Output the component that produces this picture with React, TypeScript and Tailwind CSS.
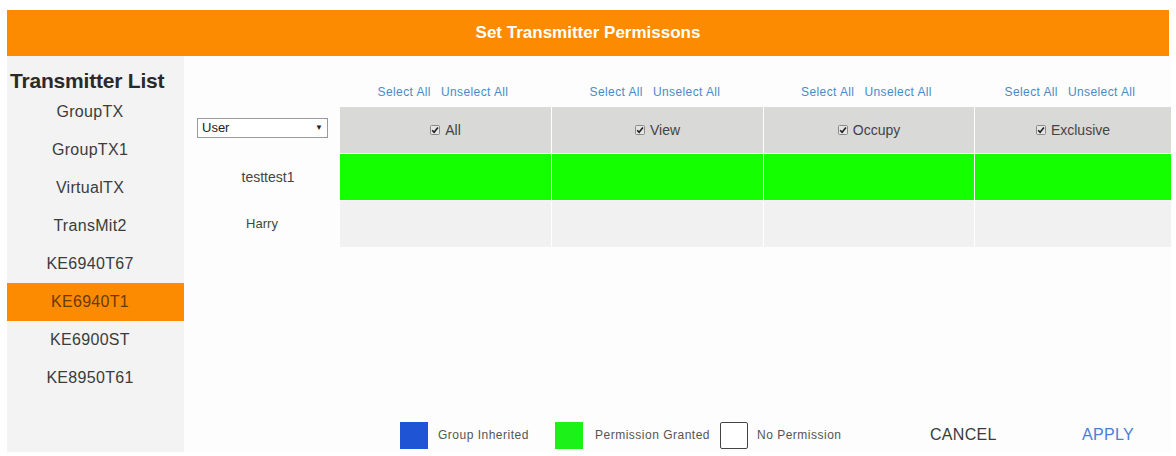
import { FC } from 'react';

const transmitters = ['GroupTX', 'GroupTX1', 'VirtualTX', 'TransMit2', 'KE6940T67', 'KE6940T1', 'KE6900ST', 'KE8950T61'];
const permisos = ['All', 'View', 'Occupy', 'Exclusive'];

const CheckIcon: FC = () => (
  <svg width="10" height="10" viewBox="0 0 10 10" className="mr-[5px] shrink-0">
    <rect x="0.5" y="0.5" width="9" height="9" rx="1" fill="#e4e4e4" stroke="#8a8a8a" />
    <path d="M2.2 5.2 L4.1 7.2 L7.9 2.6" fill="none" stroke="#1e1e1e" strokeWidth="1.6" />
  </svg>
);

const App: FC = () => {
  const seleccionado = 'KE6940T1';

  return (
    <div className="w-[1176px] h-[456px] bg-white px-[7px] pt-[10px] font-['Liberation_Sans',Arial,sans-serif] overflow-hidden">
      <div className="h-[46px] bg-[#fc8b02] flex items-center justify-center text-white font-bold text-[17px]">
        Set Transmitter Permissons
      </div>

      <div className="flex h-[396px]">
        {/* lista de transmisores */}
        <div className="w-[177px] shrink-0 bg-[#f2f3f2] pt-[12px]">
          <h2 className="pl-[3px] h-[25px] leading-[25px] text-[21px] font-bold text-[#2a2a2a] tracking-[-0.2px] whitespace-nowrap">Transmitter List</h2>
          <ul>
            {transmitters.map((tx) => (
              <li
                key={tx}
                className={
                  tx === seleccionado
                    ? 'h-[38px] flex items-center justify-center pr-[11px] text-[16px] tracking-[0.3px] bg-[#fc8b02] text-[#6a3a08]'
                    : 'h-[38px] flex items-center justify-center pr-[11px] text-[16px] tracking-[0.3px] text-[#3c3c3c]'
                }
              >
                {tx}
              </li>
            ))}
          </ul>
        </div>

        {/* permisos */}
        <div className="flex-1 flex flex-col bg-[#fcfdfc]">
          <div className="grid grid-cols-[156px_212px_212px_211px_196px]">
            <div className="h-[51px]" />
            {permisos.map((p) => (
              <div key={p} className="h-[51px] flex items-end justify-center pb-[6px] pr-[6px] gap-[10px] text-[12px] tracking-[0.4px] text-[#4a8ac6]">
                <span>Select All</span>
                <span>Unselect All</span>
              </div>
            ))}

            <div className="h-[47px] pl-[13px] pt-[11px]">
              <div className="w-[131px] h-[20px] border border-[#9a9a9a] bg-white flex items-center justify-between px-[4px] text-[13px] text-[#222]">
                <span>User</span>
                <span className="text-[8px]">▼</span>
              </div>
            </div>
            {permisos.map((p, i) => (
              <div
                key={p}
                className={
                  i < 3
                    ? 'h-[46px] mb-[1px] bg-[#d9d9d7] border-r border-white flex items-center justify-center text-[14px] text-[#444]'
                    : 'h-[46px] mb-[1px] bg-[#d9d9d7] flex items-center justify-center text-[14px] text-[#444]'
                }
              >
                <CheckIcon />
                {p}
              </div>
            ))}

            <div className="h-[47px] flex items-center justify-center pl-[12px] text-[14px] text-[#444]">testtest1</div>
            {permisos.map((p, i) => (
              <div
                key={p}
                className={i < 3 ? 'h-[46px] mb-[1px] bg-[#14ff00] border-r border-white' : 'h-[46px] mb-[1px] bg-[#14ff00]'}
              />
            ))}

            <div className="h-[46px] flex items-center justify-center text-[13px] text-[#444]">Harry</div>
            {permisos.map((p, i) => (
              <div
                key={p}
                className={i < 3 ? 'h-[46px] bg-[#f0f1f0] border-r border-white' : 'h-[46px] bg-[#f0f1f0]'}
              />
            ))}
          </div>

          <div className="flex-1" />

          {/* leyenda */}
          <div className="h-[32px] mb-[1px] flex items-center pl-[216px] text-[12px] tracking-[0.5px] text-[#555]">
            <span className="w-[28px] h-[27px] bg-[#1f55d4] shrink-0" />
            <span className="ml-[10px] w-[117px] whitespace-nowrap">Group Inherited</span>
            <span className="w-[28px] h-[27px] bg-[#1cf21a] shrink-0" />
            <span className="ml-[12px] w-[125px] whitespace-nowrap">Permission Granted</span>
            <span className="w-[28px] h-[27px] border border-[#444] rounded-[2px] bg-white shrink-0" />
            <span className="ml-[9px] w-[173px] whitespace-nowrap">No Permission</span>
            <span className="w-[152px] text-[16px] tracking-[0.3px] text-[#3a3a3a]">CANCEL</span>
            <span className="text-[16px] tracking-[0.3px] text-[#4a7fd4]">APPLY</span>
          </div>
        </div>
      </div>
    </div>
  );
};

export default App;
